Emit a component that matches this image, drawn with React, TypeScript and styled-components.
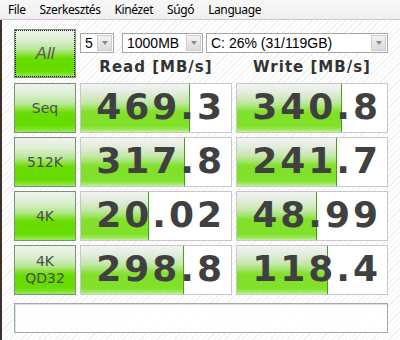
import React from 'react';
import styled, { createGlobalStyle } from 'styled-components';

const Global = createGlobalStyle`
  html, body { margin: 0; padding: 0; }
  body { width: 400px; height: 340px; overflow: hidden; background: #fff; }
  * { box-sizing: border-box; }
`;

const Window = styled.div`
  width: 400px;
  height: 340px;
  display: flex;
  flex-direction: column;
  font-family: "Noto Sans", sans-serif;
`;

const MenuBar = styled.div`
  height: 20px;
  border-bottom: 1px solid #c9c9c9;
  background: linear-gradient(#f7f7f7, #efefef);
  display: flex;
  align-items: center;
  gap: 14px;
  padding-left: 8px;
  font-size: 12px;
  letter-spacing: -0.4px;
  color: #000;
`;

const MenuItem = styled.span`
  line-height: 1;
`;

const Body = styled.div`
  flex: 1;
  border-left: 2px solid #3e3129;
  background: repeating-linear-gradient(135deg, #ffffff 0 3px, #f0f0f0 3px 4px);
  padding: 9px 0 0 12px;
  display: flex;
  flex-direction: column;
`;

const Board = styled.div`
  display: grid;
  grid-template-columns: 62px 152px 152px;
  grid-template-rows: 50px repeat(4, 50px);
  column-gap: 4px;
  row-gap: 4px;
`;

const greenFace = `linear-gradient(to bottom,
  #eef3ec 0%, #dcefd2 22%, #b6e792 42%, #7fdf22 55%,
  #66dc00 62%, #66dc00 86%, #7ee42a 94%, #9aea5a 100%)`;

const LabelButton = styled.div<{ $focus?: boolean }>`
  height: ${(p) => (p.$focus ? '49px' : '50px')};
  border: 1px solid #7b937b;
  background: ${greenFace};
  display: flex;
  flex-direction: column;
  align-items: center;
  justify-content: center;
  color: #4c4c4c;
  font-family: "DejaVu Sans", sans-serif;
  font-size: 14px;
  line-height: 17px;
  outline: ${(p) => (p.$focus ? '1px dotted #1a1a1a' : 'none')};
  outline-offset: -2px;
`;

const AllText = styled.span`
  font-family: "Liberation Sans", sans-serif;
  font-style: italic;
  font-size: 17px;
  color: #5a5a5a;
`;

const TopRight = styled.div`
  grid-column: 2 / 4;
  display: flex;
  flex-direction: column;
  padding-top: 4px;
`;

const ComboRow = styled.div`
  display: flex;
  height: 20px;
`;

const Combo = styled.div<{ $w: number; $gap: number }>`
  width: ${(p) => p.$w}px;
  margin-right: ${(p) => p.$gap}px;
  height: 20px;
  border: 1px solid #a6a6a6;
  background: #fff;
  display: flex;
  align-items: center;
  justify-content: space-between;
  padding: 1px 1px 1px 4px;
  font-family: "Liberation Sans", sans-serif;
  font-size: 14px;
  color: #000;
`;

const DropButton = styled.div`
  width: 15px;
  height: 100%;
  border: 1px solid #cdcdcd;
  background: linear-gradient(#f2f2f2, #dadada);
  display: flex;
  align-items: center;
  justify-content: center;
  &::after {
    content: '';
    border-left: 3.5px solid transparent;
    border-right: 3.5px solid transparent;
    border-top: 4px solid #8a8a8a;
  }
`;

const HeaderRow = styled.div`
  display: grid;
  grid-template-columns: 152px 152px;
  column-gap: 4px;
  padding-top: 5px;
`;

const Header = styled.div`
  text-align: center;
  font-family: "DejaVu Sans", sans-serif;
  font-weight: bold;
  font-size: 15px;
  letter-spacing: 1px;
  color: #333;
  line-height: 18px;
`;

const ValueBox = styled.div`
  height: 50px;
  border: 1px solid #c8c8c8;
  background: #fff;
  display: grid;
  grid-template: 1fr / 1fr;
`;

const Bar = styled.div`
  grid-area: 1 / 1;
  height: 100%;
  background: linear-gradient(to bottom,
    #f2f4f2 0%, #e2ecdc 18%, #c4e8a8 38%, #9ee464 50%,
    #80e02a 58%, #80e02a 88%, #9ce85c 95%, #c2f29a 100%);
  border-right: 1px solid #4a9e1a;
`;

const Value = styled.div`
  grid-area: 1 / 1;
  justify-self: end;
  align-self: center;
  padding-right: 6px;
  margin-top: -2px;
  font-family: "DejaVu Sans", sans-serif;
  font-weight: bold;
  font-size: 36px;
  letter-spacing: 3px;
  line-height: 1;
  color: #404040;
`;

const Status = styled.div`
  margin-top: 8px;
  width: 374px;
  height: 30px;
  border: 1px solid #a8a8a8;
  box-shadow: inset 1px 1px 0 #e0e0e0;
  background: rgba(255, 255, 255, 0.85);
`;

type Row = { label: string[]; read: string; write: string };

const rows: Row[] = [
  { label: ['Seq'], read: '469.3', write: '340.8' },
  { label: ['512K'], read: '317.8', write: '241.7' },
  { label: ['4K'], read: '20.02', write: '48.99' },
  { label: ['4K', 'QD32'], read: '298.8', write: '118.4' },
];

const barWidth = (v: string) => Math.round(30 * Math.log10(parseFloat(v)) + 29);

const Meter = ({ value }: { value: string }) => (
  <ValueBox>
    <Bar style={{ width: barWidth(value) }} />
    <Value>{value}</Value>
  </ValueBox>
);

export default function App() {
  return (
    <>
      <Global />
      <Window>
        <MenuBar>
          <MenuItem>File</MenuItem>
          <MenuItem>Szerkesztés</MenuItem>
          <MenuItem>Kinézet</MenuItem>
          <MenuItem>Súgó</MenuItem>
          <MenuItem>Language</MenuItem>
        </MenuBar>
        <Body>
          <Board>
            <LabelButton $focus>
              <AllText>All</AllText>
            </LabelButton>
            <TopRight>
              <ComboRow>
                <Combo $w={34} $gap={8}>
                  <span>5</span>
                  <DropButton />
                </Combo>
                <Combo $w={81} $gap={3}>
                  <span>1000MB</span>
                  <DropButton />
                </Combo>
                <Combo $w={182} $gap={0}>
                  <span>C: 26% (31/119GB)</span>
                  <DropButton />
                </Combo>
              </ComboRow>
              <HeaderRow>
                <Header>Read [MB/s]</Header>
                <Header>Write [MB/s]</Header>
              </HeaderRow>
            </TopRight>
            {rows.map((r) => (
              <React.Fragment key={r.label.join('')}>
                <LabelButton>
                  {r.label.map((l) => (
                    <span key={l}>{l}</span>
                  ))}
                </LabelButton>
                <Meter value={r.read} />
                <Meter value={r.write} />
              </React.Fragment>
            ))}
          </Board>
          <Status />
        </Body>
      </Window>
    </>
  );
}
